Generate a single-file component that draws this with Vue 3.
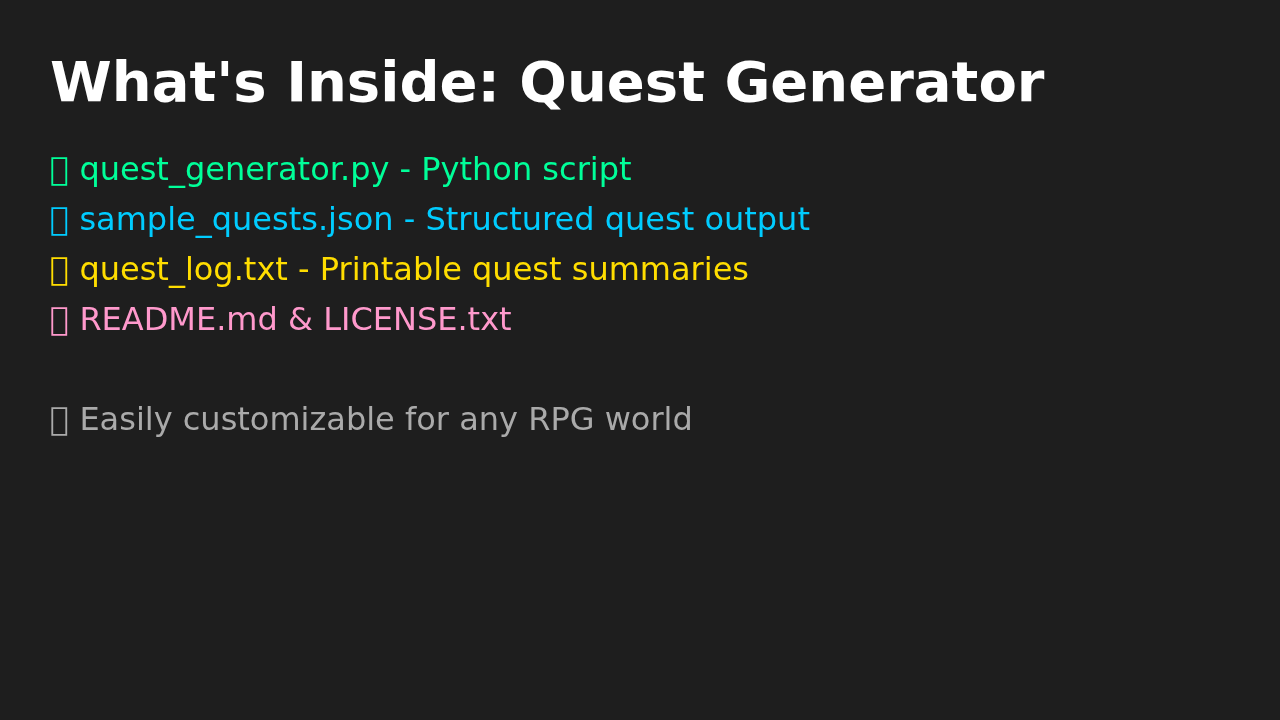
<script setup>
const rows = [
  { text: '\uE000 quest_generator.py - Python script', cls: 'green' },
  { text: '\uE000 sample_quests.json - Structured quest output', cls: 'blue' },
  { text: '\uE000 quest_log.txt - Printable quest summaries', cls: 'yellow' },
  { text: '\uE000 README.md & LICENSE.txt', cls: 'pink' },
]
const note = '\uE000 Easily customizable for any RPG world'
</script>

<template>
  <main class="slide">
    <h1 class="title">What's Inside: Quest Generator</h1>
    <ul class="list">
      <li v-for="r in rows" :key="r.text" :class="r.cls">{{ r.text }}</li>
    </ul>
    <p class="note">{{ note }}</p>
  </main>
</template>

<style>
html, body { background: #1e1e1e; }
</style>

<style scoped>
.slide {
  box-sizing: border-box;
  width: 1280px;
  height: 720px;
  padding: 49px 50px 50px;
  font-family: "DejaVu Sans", sans-serif;
  will-change: opacity;
}
.title {
  margin: 0 0 30px;
  font-size: 56px;
  line-height: normal;
  font-weight: 700;
  color: #ffffff;
}
.list {
  margin: 0;
  padding: 0;
  list-style: none;
}
.list li {
  font-size: 32px;
  line-height: 50px;
}
.note {
  margin: 50px 0 0;
  font-size: 32px;
  line-height: 50px;
  color: #aaaaaa;
}
.green { color: #00ff99; }
.blue { color: #00ccff; }
.yellow { color: #ffdd00; }
.pink { color: #ff99cc; }
</style>
